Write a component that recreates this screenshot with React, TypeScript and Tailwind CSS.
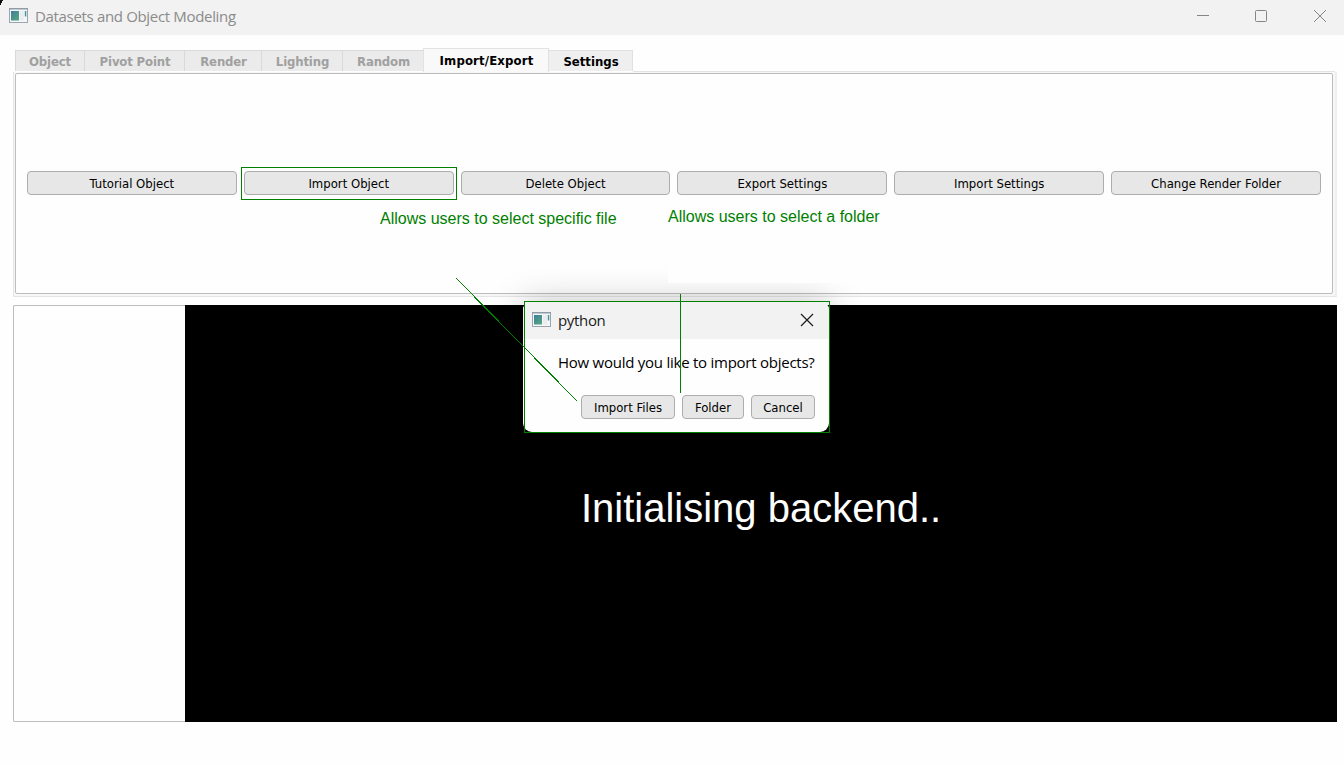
import React from "react";

const UI = "font-['DejaVu_Sans_Condensed','DejaVu_Sans',sans-serif] [font-stretch:condensed]";
const SEGOE = "font-['Open_Sans','Noto_Sans',sans-serif]";

function AppIcon() {
  return (
    <svg width="19" height="16" viewBox="0 0 19 16" className="block shrink-0">
      <defs>
        <linearGradient id="pane" x1="0" y1="0" x2="1" y2="1">
          <stop offset="0" stopColor="#3f7fa0" />
          <stop offset="1" stopColor="#57a878" />
        </linearGradient>
      </defs>
      <rect x="0.5" y="0.5" width="18" height="14" fill="#f4f6f8" stroke="#9aa5ad" />
      <rect x="0" y="0" width="19" height="1.5" fill="#8f9ca6" />
      <rect x="2" y="3" width="8" height="9.5" fill="url(#pane)" />
      <rect x="11" y="3" width="4" height="9.5" fill="#e9edef" />
      <rect x="15.8" y="3" width="1.5" height="5.5" fill="#4b97a0" />
    </svg>
  );
}

type ButtonProps = { label: string; className: string };

function PushButton({ label, className }: ButtonProps) {
  return (
    <button
      className={`${UI} flex h-6 items-center justify-center whitespace-nowrap rounded-[4px] border border-[#adadad] bg-[#e7e7e7] pt-px text-[13px] leading-none text-black ${className}`}
    >
      {label}
    </button>
  );
}

const tabs = [
  { label: "Object", width: "w-[69px]" },
  { label: "Pivot Point", width: "w-[100px] pl-px" },
  { label: "Render", width: "w-[77px] pl-px" },
  { label: "Lighting", width: "w-[81px] pl-px" },
  { label: "Random", width: "w-[81px] pl-px" },
];

const actions = [
  "Tutorial Object",
  "Import Object",
  "Delete Object",
  "Export Settings",
  "Import Settings",
  "Change Render Folder",
];

export default function App() {
  return (
    <div className="relative flex h-[766px] w-[1344px] flex-col overflow-hidden bg-[#fefefe]">
      <header className="flex h-[35px] shrink-0 items-center bg-[#f2f2f2] pl-[9px] pr-[17px]">
        <div className="-mt-1">
          <AppIcon />
        </div>
        <h1 className={`${SEGOE} -mt-0.5 ml-[7px] grow text-[15px] leading-none tracking-[-0.33px] text-[#8b8b8b]`}>
          Datasets and Object Modeling
        </h1>
        <svg width="131" height="14" viewBox="0 0 131 14" className="-mt-1 block" fill="none" stroke="#858585">
          <path d="M1 6.5h12" />
          <rect x="59.5" y="1.5" width="11" height="11" rx="1" />
          <path d="M118 1l12 12M130 1l-12 12" />
        </svg>
      </header>

      <nav className={`${UI} flex h-[37px] shrink-0 items-end pl-[15px] text-[13px] font-bold leading-none`}>
        {tabs.map((t) => (
          <div
            key={t.label}
            className={`${t.width} mb-px flex h-[21px] items-center justify-center border-l border-t border-[#d9d9d9] bg-[#ebebeb] tracking-[-0.15px] text-[#a0a0a0]`}
          >
            {t.label}
          </div>
        ))}
        <div className="flex h-6 w-[126px] items-center justify-center border-x border-t border-[#e2e2e2] bg-[#f9f9f9] pl-px tracking-[0.15px] text-black">
          Import/Export
        </div>
        <div className="mb-px flex h-[21px] w-[84px] items-center justify-center border-r border-t border-[#e0e0e0] bg-[#efefef] pl-px text-black">
          Settings
        </div>
        <div className="mr-[9px] h-px grow bg-[#e3e3e3]" />
      </nav>

      <main className="ml-[13px] flex h-[225px] w-[1324px] shrink-0 border-b border-l border-r-2 border-[#e5e5e5] border-r-[#efefef] bg-[#f7f7f7] pb-[2px] pl-px pr-[2px] pt-px">
        <div className="flex grow gap-[7px] rounded-[2px] border border-[#bdbdbd] bg-[#fefefe] px-[11px] pt-[97px]">
          {actions.map((a) => (
            <PushButton key={a} label={a} className="min-w-0 flex-1" />
          ))}
        </div>
      </main>

      <section className="ml-[13px] mt-2 flex h-[417px] w-[1324px] shrink-0">
        <div className="w-[172px] rounded-l-[2px] border-y border-l border-[#bdbdbd] bg-[#fefefe]" />
        <div className="flex grow justify-center bg-black pt-[180px]">
          <p className="font-['Liberation_Sans',sans-serif] text-[40px] leading-[46px] text-white">
            Initialising backend..
          </p>
        </div>
      </section>

      <div className="absolute left-0 top-[35px] h-[270px] w-full overflow-hidden">
        <div className="absolute left-[523px] top-[266px] h-[131px] w-[306px] rounded-lg shadow-[0_4px_36px_rgba(0,0,0,0.28)]" />
        <div className="absolute left-[668px] top-[168px] h-20 w-[213px] bg-[#fefefe]" />
      </div>

      <p className="absolute left-[380px] top-[210px] whitespace-nowrap font-['Liberation_Sans',sans-serif] text-base leading-[18px] text-[#008000]">
        Allows users to select specific file
      </p>
      <p className="absolute left-[668px] top-[208px] whitespace-nowrap font-['Liberation_Sans',sans-serif] text-base leading-[18px] text-[#008000]">
        Allows users to select a folder
      </p>

      <div className="absolute left-[523px] top-[301px] flex h-[131px] w-[306px] flex-col overflow-hidden rounded-[9px] bg-[#fefefe]">
        <div className="flex h-[38px] shrink-0 items-center bg-[#f2f2f2] pl-[9px] pr-[15px]">
          <AppIcon />
          <span className={`${SEGOE} ml-[7px] grow text-[15px] leading-none tracking-[-0.33px] text-[#1b1b1b]`}>python</span>
          <svg width="14" height="14" viewBox="0 0 14 14" fill="none" stroke="#1b1b1b" strokeWidth="1.2">
            <path d="M1 1l12 12M13 1L1 13" />
          </svg>
        </div>
        <p className={`${SEGOE} mt-[13px] whitespace-nowrap pl-[35px] text-[15px] leading-5 tracking-[-0.25px] text-black`}>
          How would you like to import objects?
        </p>
        <div className="mt-[23px] flex gap-[7px] pl-[58px]">
          <PushButton label="Import Files" className="w-[94px]" />
          <PushButton label="Folder" className="w-[62px]" />
          <PushButton label="Cancel" className="w-16" />
        </div>
      </div>

      <svg
        width="1344"
        height="766"
        viewBox="0 0 1344 766"
        className="pointer-events-none absolute left-0 top-0"
        fill="none"
        stroke="#008000"
        shapeRendering="crispEdges"
      >
        <rect x="241.5" y="167.5" width="215" height="32" />
        <rect x="524.5" y="301.5" width="305" height="131" />
        <path d="M456.5 278.5L577 401M680.5 294v99" />
        <path d="M0 0h3L0 6z" fill="#111" stroke="none" />
      </svg>
    </div>
  );
}
